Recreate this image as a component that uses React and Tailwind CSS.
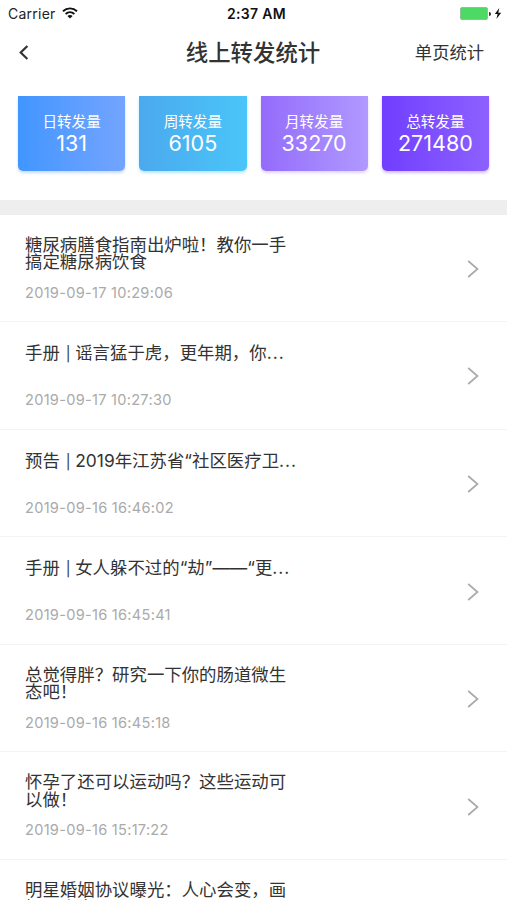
const stats = [
  { label: '日转发量', value: '131', look: 'bg-linear-to-r from-[#4096ff] to-[#73a4ff] shadow-[0_2px_3px_#73a4ff66]' },
  { label: '周转发量', value: '6105', look: 'bg-linear-to-r from-[#4ba9ed] to-[#4ac5f9] shadow-[0_2px_3px_#4ac5f966]' },
  { label: '月转发量', value: '33270', look: 'bg-linear-to-r from-[#946bfb] to-[#b099ff] shadow-[0_2px_3px_#b099ff66]' },
  { label: '总转发量', value: '271480', look: 'bg-linear-to-r from-[#713dff] to-[#8d60ff] shadow-[0_2px_3px_#8d60ff66]' },
];

const articles = [
  { title: '糖尿病膳食指南出炉啦！教你一手搞定糖尿病饮食', time: '2019-09-17 10:29:06' },
  { tag: '手册', title: '谣言猛于虎，更年期，你', cut: true, time: '2019-09-17 10:27:30' },
  { tag: '预告', title: '2019年江苏省“社区医疗卫', cut: true, time: '2019-09-16 16:46:02' },
  { tag: '手册', title: '女人躲不过的“劫”——“更', cut: true, time: '2019-09-16 16:45:41' },
  { title: '总觉得胖？研究一下你的肠道微生态吧！', time: '2019-09-16 16:45:18' },
  { title: '怀孕了还可以运动吗？这些运动可以做！', time: '2019-09-16 15:17:22' },
  { title: '明星婚姻协议曝光：人心会变，画押不会变', time: '2019-09-16 15:10:08' },
];

function StatusBar() {
  return (
    <div className="grid h-7 grid-cols-3 items-center pr-[5px] pl-2 text-[14px] text-[#222]">
      <div className="-mt-[2px] flex items-center gap-[6px]">
        <span className="tracking-[0.25px]">Carrier</span>
        <svg className="-mt-px" width="16" height="12" viewBox="0 0 16 12" fill="none" stroke="#111" strokeWidth="1.9">
          <path d="M1 4.2C5 .4 11 .4 15 4.2" />
          <path d="M3.6 7C6.2 4.6 9.8 4.6 12.4 7" />
          <path d="M8 11.4 5.4 9C6.8 7.6 9.2 7.6 10.6 9Z" fill="#111" stroke="none" />
        </svg>
      </div>
      <div className="-mt-[2px] pl-[3px] text-center font-semibold tracking-[0.3px] text-[#111]">2:37 AM</div>
      <div className="-mt-px flex items-center justify-end">
        <div className="h-[13px] w-7 rounded-[2px] border border-[#8fc19a] bg-[#4cd964]" />
        <div className="ml-px h-1 w-[2px] rounded-r-full bg-[#333]" />
        <svg className="ml-[3px]" width="8" height="11" viewBox="0 0 8 11">
          <path d="M5.3 0 .8 6H3.6L2.4 11 7.2 4.7H4.3Z" fill="#111" />
        </svg>
      </div>
    </div>
  );
}

export default function App() {
  return (
    <div className="h-[900px] w-[507px] overflow-hidden bg-white font-[Inter,'Noto_Sans_CJK_SC',sans-serif]">
      <StatusBar />
      <header className="grid h-12 grid-cols-[1fr_auto_1fr] items-center pr-[23px] pl-[19px] text-[#333]">
        <svg width="10" height="15" viewBox="0 0 10 15" fill="none" stroke="#333" strokeWidth="2.2">
          <path d="M8.4 1 1.7 7.5 8.4 14" />
        </svg>
        <h1 className="pt-px pl-[3px] text-[22.4px] font-medium">线上转发统计</h1>
        <span className="pt-px text-right text-[17.3px]">单页统计</span>
      </header>
      <section className="grid h-[124px] grid-cols-4 gap-[14px] px-[18px] pt-5 pb-[29px]">
        {stats.map((s) => (
          <div key={s.label} className={`flex flex-col items-center rounded-b-[5px] pt-4 text-white ${s.look}`}>
            <span className="text-[14.6px] leading-5">{s.label}</span>
            <span className="text-[21.5px] leading-[23px]">{s.value}</span>
          </div>
        ))}
      </section>
      <div className="h-[14.5px] bg-[#eee]" />
      <ul>
        {articles.map((a) => (
          <li key={a.time} className="flex h-[107.6px] items-center justify-between border-b border-[#f4f4f4] pr-7 pl-[25px]">
            <div className={`flex h-full flex-col justify-start ${a.cut ? 'pt-[22px]' : 'pt-[21px]'}`}>
              <p className="h-[35px] w-[275px] text-[17.4px] leading-[17.5px] tracking-[0.02px] break-all text-[#333]">
                {a.tag && (
                  <>
                    {a.tag}
                    <span className="mr-[4.5px] ml-[6px] text-[14.5px]">|</span>
                  </>
                )}
                {a.title}
                {a.cut && <span className="tracking-[1px]">...</span>}
              </p>
              <time className={`text-[14.6px] leading-5 tracking-[0.27px] text-[#aaa] ${a.cut ? 'mt-[11px]' : 'mt-[12px]'}`}>{a.time}</time>
            </div>
            <svg className="mt-[2px]" width="12" height="18" viewBox="0 0 12 18" fill="none" stroke="#aaa" strokeWidth="1.7">
              <path d="M1.2 1 10.5 9 1.2 17" />
            </svg>
          </li>
        ))}
      </ul>
    </div>
  );
}
